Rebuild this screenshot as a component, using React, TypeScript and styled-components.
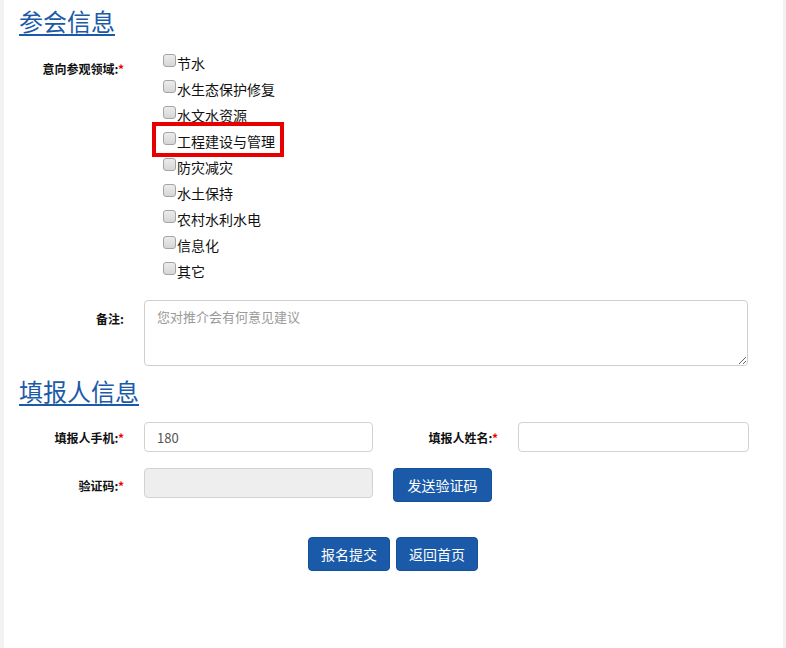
import React from "react";
import styled, { createGlobalStyle } from "styled-components";

const Global = createGlobalStyle`
  html, body { margin: 0; padding: 0; background: #f2f2f2; }
  body { font-family: "Noto Sans CJK SC", "Noto Sans", "Liberation Sans", sans-serif; color: #222; }
  * { box-sizing: border-box; }
`;

const Page = styled.div`
  margin: 0 3px 0 4px;
  background: #fff;
  min-height: 648px;
  padding: 6px 15px 40px 15px;
`;

const Heading = styled.h2<{ $top?: number }>`
  margin: ${(p) => p.$top ?? 0}px 0 0 0;
  font-size: 24px;
  font-weight: 400;
  line-height: 30px;
  color: #1a5aa8;
  text-decoration: underline;
  text-underline-offset: 3px;
  text-decoration-thickness: 2px;
`;

const Row = styled.div<{ $top: number }>`
  display: flex;
  align-items: flex-start;
  margin-top: ${(p) => p.$top}px;
`;

const Label = styled.label<{ $width?: number; $pad?: number }>`
  flex: none;
  width: ${(p) => p.$width ?? 105}px;
  text-align: right;
  font-size: 12px;
  font-weight: 700;
  line-height: 14px;
  padding-top: ${(p) => p.$pad ?? 9}px;
  margin-right: 20px;
  color: #111;
  white-space: nowrap;
`;

const Star = styled.span`
  color: #e00;
`;

const CheckList = styled.div`
  display: flex;
  flex-direction: column;
  padding-left: 19px;
`;

const CheckItem = styled.div`
  position: relative;
  display: flex;
  align-items: flex-start;
  height: 26px;
  font-size: 14px;
  line-height: 20px;
  color: #111;
`;

const Box = styled.span`
  display: inline-block;
  width: 13px;
  height: 13px;
  margin-top: 1px;
  margin-right: 1px;
  border: 1px solid #a4a4a4;
  border-radius: 3px;
  background: linear-gradient(#ececec, #d6d6d6);
`;

const Highlight = styled.span`
  position: absolute;
  left: -11px;
  top: -9px;
  width: 132px;
  height: 35px;
  border: 4px solid #e80000;
  pointer-events: none;
`;

const TextArea = styled.textarea`
  width: 604px;
  height: 66px;
  border: 1px solid #cfcfcf;
  border-radius: 4px;
  padding: 7px 12px;
  font-family: inherit;
  font-size: 13px;
  line-height: 18px;
  color: #555;
  resize: vertical;
  &::placeholder { color: #9a9a9a; }
`;

const Input = styled.input<{ $disabled?: boolean; $width?: number }>`
  width: ${(p) => p.$width ?? 229}px;
  height: 30px;
  border: 1px solid #d2d2d2;
  border-radius: 4px;
  padding: 0 12px;
  font-family: inherit;
  font-size: 13px;
  color: #555;
  background: ${(p) => (p.$disabled ? "#eeeeee" : "#fff")};
`;

const Button = styled.button<{ $width: number; $ml?: number }>`
  width: ${(p) => p.$width}px;
  height: 34px;
  margin-left: ${(p) => p.$ml ?? 0}px;
  border: 1px solid #13509a;
  border-radius: 4px;
  background: #1a5aa8;
  color: #fff;
  font-family: inherit;
  font-size: 14px;
  padding: 0;
`;

const Actions = styled.div`
  display: flex;
  justify-content: center;
  gap: 6px;
  margin-top: 35px;
  padding-right: 1px;
`;

const areas = [
  "节水",
  "水生态保护修复",
  "水文水资源",
  "工程建设与管理",
  "防灾减灾",
  "水土保持",
  "农村水利水电",
  "信息化",
  "其它",
];

export default function App() {
  return (
    <>
      <Global />
      <Page>
        <Heading>参会信息</Heading>
        <Row $top={17}>
          <Label $pad={9}>
            意向参观领域:<Star>*</Star>
          </Label>
          <CheckList>
            {areas.map((a, i) => (
              <CheckItem key={a}>
                <Box />
                {a}
                {i === 3 && <Highlight />}
              </CheckItem>
            ))}
          </CheckList>
        </Row>
        <Row $top={13}>
          <Label $pad={12}>备注:</Label>
          <TextArea placeholder="您对推介会有何意见建议" />
        </Row>
        <Heading $top={10}>填报人信息</Heading>
        <Row $top={16}>
          <Label $pad={9}>
            填报人手机:<Star>*</Star>
          </Label>
          <Input defaultValue="180" />
          <Label $width={125} $pad={9}>
            填报人姓名:<Star>*</Star>
          </Label>
          <Input $width={231} />
        </Row>
        <Row $top={16}>
          <Label $pad={11}>
            验证码:<Star>*</Star>
          </Label>
          <Input $disabled disabled />
          <Button $width={99} $ml={20}>发送验证码</Button>
        </Row>
        <Actions>
          <Button $width={82}>报名提交</Button>
          <Button $width={82}>返回首页</Button>
        </Actions>
      </Page>
    </>
  );
}
